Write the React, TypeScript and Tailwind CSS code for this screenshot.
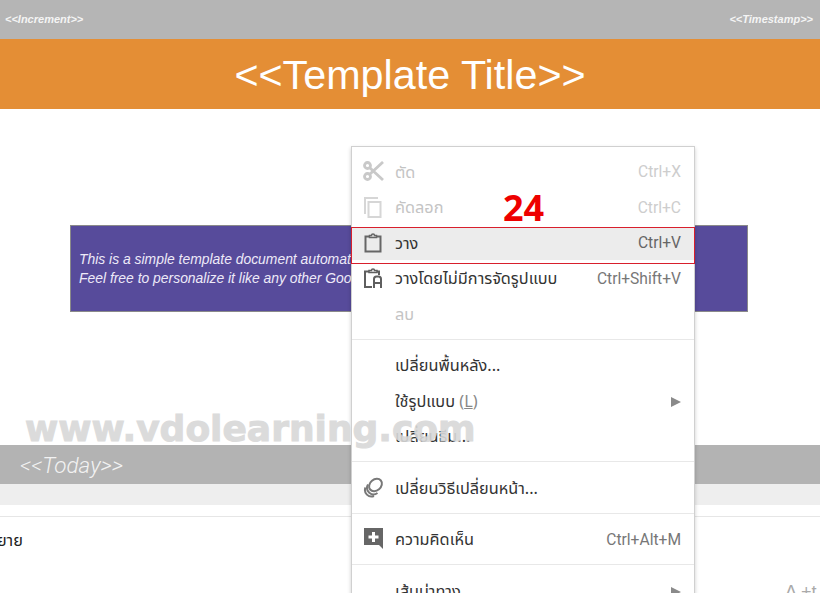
import type { ReactNode } from "react";

const thai = { fontFamily: '"Noto Sans Thai", "Noto Sans", Roboto, "Liberation Sans", sans-serif' };

function CutIcon() {
  return (
    <svg viewBox="0 0 24 24" className="w-[24px] h-[24px]" fill="none" stroke="#c9c9c9" strokeWidth="2.800">
      <circle cx="4.500" cy="4.500" r="3" />
      <circle cx="4.500" cy="15.500" r="3" />
      <path d="M7 7l13 12M7 13L20 1" />
    </svg>
  );
}

function CopyIcon() {
  return (
    <svg viewBox="0 0 24 24" className="w-[24px] h-[24px]" fill="none" stroke="#d6d6d6" strokeWidth="2">
      <path d="M2 18V2h13" />
      <rect x="5.500" y="6" width="12" height="15" />
    </svg>
  );
}

function PasteIcon() {
  return (
    <svg viewBox="0 0 24 24" className="w-[24px] h-[24px]" fill="none" stroke="#666" strokeWidth="2">
      <path d="M6.500 4.500H2.500v15h15v-15H13.500" />
      <path d="M6.500 5.500V3.500h2a1.500 1.500 0 0 1 3 0h2v2z" strokeWidth="1.500" />
    </svg>
  );
}

function PastePlainIcon() {
  return (
    <svg viewBox="0 0 24 24" className="w-[24px] h-[24px]" fill="none" stroke="#5f5f5f" strokeWidth="2">
      <path d="M6 4.500H2v15.500h7M14 4.500h2V8" />
      <path d="M6 5.500V3.500h2.500a1.500 1.500 0 0 1 3 0H14v2z" strokeWidth="1.500" />
      <path d="M11 21v-9a2.500 2.500 0 0 1 2.500-2.500h2a2.500 2.500 0 0 1 2.500 2.500v9M11 16h7" />
    </svg>
  );
}

function ThemeIcon() {
  return (
    <svg viewBox="0 0 24 24" className="w-[24px] h-[24px]" fill="none" stroke="#787878" strokeWidth="2">
      <ellipse cx="12.500" cy="8" rx="7" ry="5.500" transform="rotate(-40 12.500 8)" />
      <path d="M5 7.500a6.500 6.500 0 0 0 9.500 8.500M2.500 10.500a6.500 6.500 0 0 0 8.500 8.500" />
    </svg>
  );
}

function CommentIcon() {
  return (
    <svg viewBox="0 0 24 24" className="w-[24px] h-[24px]">
      <path d="M1 0h19v21l-4-4H1z" fill="#666" />
      <path d="M9 4h3v3.500h3.500v3H12V14H9v-3.500H5.500v-3H9z" fill="#fff" />
    </svg>
  );
}

function MenuRow({
  icon,
  label,
  shortcut,
  disabled,
  active,
  arrow,
}: {
  icon?: ReactNode;
  label: ReactNode;
  shortcut?: string;
  disabled?: boolean;
  active?: boolean;
  arrow?: boolean;
}) {
  return (
    <div className="relative h-[35.5px] shrink-0 flex items-center pl-[11px] pr-[13px]">
      <div className="w-[32px] flex items-center">{icon}</div>
      <span className={`text-[16.300px] whitespace-nowrap ${disabled ? "text-[#c4c4c4]" : "text-[#333]"}`} style={thai}>
        {label}
      </span>
      {shortcut && (
        <span
          className={`ml-auto text-[15.600px] font-['Roboto',sans-serif] ${
            disabled ? "text-[#cdcdcd]" : active ? "text-[#666]" : "text-[#777]"
          }`}
        >
          {shortcut}
        </span>
      )}
      {arrow && (
        <svg viewBox="0 0 10 10" className="ml-auto w-[10px] h-[10px]">
          <path d="M0 0l10 5-10 5z" fill="#8a8a8a" />
        </svg>
      )}
    </div>
  );
}

// separator line sits a little above the middle of its gap
function Separator() {
  return (
    <div className="h-[16px] shrink-0 pt-[6px]">
      <div className="h-px w-full bg-[#e8e8e8]" />
    </div>
  );
}

function ContextMenu() {
  return (
    <div className="absolute left-[351px] top-[146px] w-[344px] h-[460px] bg-white border border-[#d0d0d0] shadow-[0_2px_4px_rgba(0,0,0,0.2)] pt-[8px] flex flex-col">
      {/* hover highlight for the paste row */}
      <div className="absolute -left-px -right-px top-[80px] h-[37px] bg-[#ececec] border border-[#d81f2c] shadow-[inset_0_-3px_0_#ffffff]" />
      <MenuRow disabled icon={<CutIcon />} label="ตัด" shortcut="Ctrl+X" />
      <MenuRow disabled icon={<CopyIcon />} label="คัดลอก" shortcut="Ctrl+C" />
      <MenuRow active icon={<PasteIcon />} label="วาง" shortcut="Ctrl+V" />
      <MenuRow icon={<PastePlainIcon />} label="วางโดยไม่มีการจัดรูปแบบ" shortcut="Ctrl+Shift+V" />
      <MenuRow disabled label="ลบ" />
      <Separator />
      <MenuRow label="เปลี่ยนพื้นหลัง..." />
      <MenuRow label={<>ใช้รูปแบบ <span className="text-[#888]">(<u>L</u>)</span></>} arrow />
      <MenuRow label="เปลี่ยนธีม..." />
      <Separator />
      <MenuRow icon={<ThemeIcon />} label="เปลี่ยนวิธีเปลี่ยนหน้า..." />
      <Separator />
      <MenuRow icon={<CommentIcon />} label="ความคิดเห็น" shortcut="Ctrl+Alt+M" />
      <Separator />
      <MenuRow label="เส้นบ่าทาง" arrow />
    </div>
  );
}

export default function App() {
  return (
    <div className="w-[827px] h-[597px] bg-white overflow-hidden">
      <div className="relative w-[820px] h-[593px] overflow-hidden flex flex-col font-['Liberation_Sans',sans-serif]">
        {/* Slide header */}
        <div className="h-[39px] shrink-0 bg-[#b5b5b5] flex items-center justify-between pl-[5px] pr-[7px] text-[11px] font-bold italic text-[#f4f4f4]">
          <span>&lt;&lt;Increment&gt;&gt;</span>
          <span>&lt;&lt;Timestamp&gt;&gt;</span>
        </div>
        <div className="h-[70px] shrink-0 bg-[#e48e35] flex items-center justify-center pt-[3px] text-[41.300px] text-white">
          &lt;&lt;Template Title&gt;&gt;
        </div>

        {/* Purple banner */}
        <div className="mt-[116px] ml-[70px] w-[678px] h-[87px] shrink-0 bg-[#574b9b] border border-[#8a8a8a] flex flex-col justify-center px-[8px] text-[13.900px] leading-[19px] italic text-[#eeeaf8]">
          <p className="whitespace-nowrap">This is a simple template document automation</p>
          <p className="whitespace-nowrap">Feel free to personalize it like any other Google Doc</p>
        </div>

        {/* Lower slide */}
        <div className="mt-[133px] h-[39px] shrink-0 bg-[#b3b3b3] flex items-center pl-[20px] pt-[2px] text-[22.500px] italic text-[#f2f2f2] font-['Roboto',sans-serif] font-light">
          &lt;&lt;Today&gt;&gt;
        </div>
        <div className="h-[21px] shrink-0 bg-[#eeeeee]" />
        <div className="mt-[11px] h-px shrink-0 bg-[#e6e6e6]" />
        <div className="mt-[12px] text-[16.300px] text-[#222] -ml-[12px]" style={thai}>
          ขยาย
        </div>

        <div className="absolute left-[785px] top-[583px] text-[18px] leading-none text-[#aaa] whitespace-nowrap">A +t</div>

        <ContextMenu />

        {/* Watermark and step number */}
        <div className="absolute left-[25px] top-[408px] text-[36px] leading-[42px] font-bold whitespace-nowrap text-[#d8d8d8] opacity-90 [-webkit-text-stroke:1px_#d8d8d8] font-['DejaVu_Sans',sans-serif]">
          www.vdolearning.com
        </div>
        <div className="absolute left-[503px] top-[187px] text-[36px] leading-[42px] font-bold text-[#ee0000] font-['Open_Sans',sans-serif]">
          24
        </div>
      </div>
    </div>
  );
}
